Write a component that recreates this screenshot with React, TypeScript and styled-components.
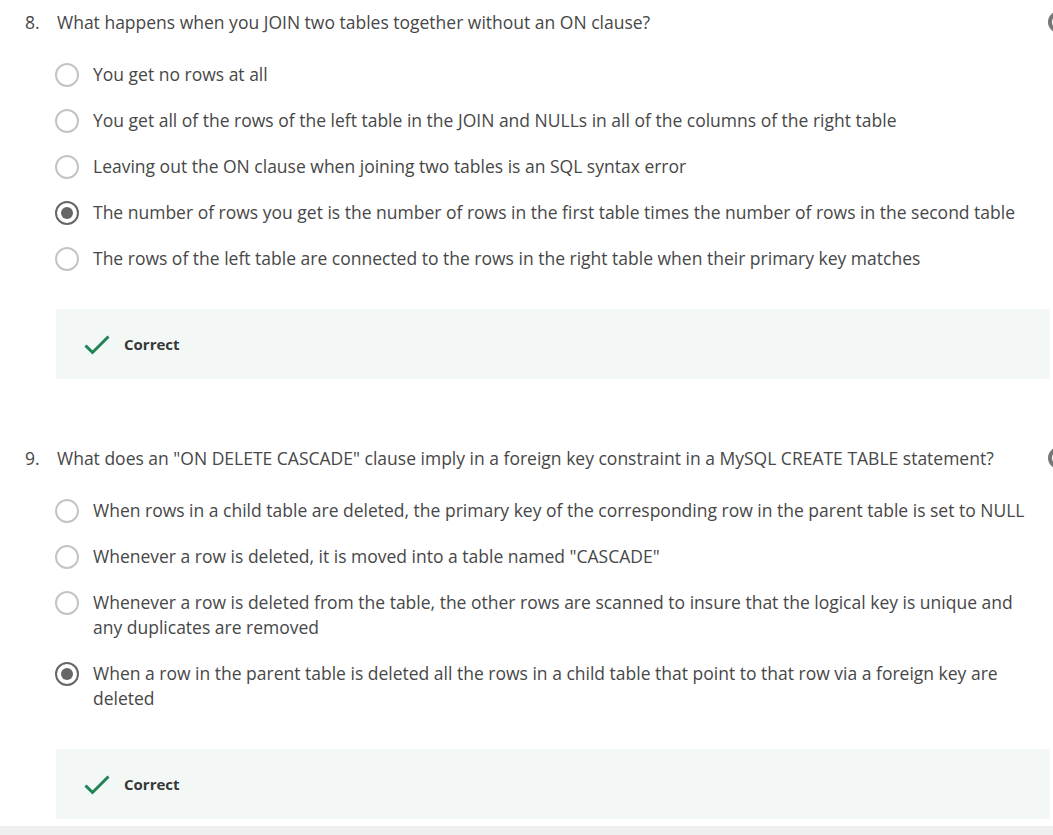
import styled, { createGlobalStyle } from "styled-components";

type Option = { lines: string[]; selected?: boolean };
type Question = { num: number; text: string; options: Option[] };

const questions: Question[] = [
  {
    num: 8,
    text: "What happens when you JOIN two tables together without an ON clause?",
    options: [
      { lines: ["You get no rows at all"] },
      {
        lines: [
          "You get all of the rows of the left table in the JOIN and NULLs in all of the columns of the right table",
        ],
      },
      {
        lines: [
          "Leaving out the ON clause when joining two tables is an SQL syntax error",
        ],
      },
      {
        lines: [
          "The number of rows you get is the number of rows in the first table times the number of rows in the second table",
        ],
        selected: true,
      },
      {
        lines: [
          "The rows of the left table are connected to the rows in the right table when their primary key matches",
        ],
      },
    ],
  },
  {
    num: 9,
    text: 'What does an "ON DELETE CASCADE" clause imply in a foreign key constraint in a MySQL CREATE TABLE statement?',
    options: [
      {
        lines: [
          "When rows in a child table are deleted, the primary key of the corresponding row in the parent table is set to NULL",
        ],
      },
      {
        lines: [
          'Whenever a row is deleted, it is moved into a table named "CASCADE"',
        ],
      },
      {
        lines: [
          "Whenever a row is deleted from the table, the other rows are scanned to insure that the logical key is unique and",
          "any duplicates are removed",
        ],
      },
      {
        lines: [
          "When a row in the parent table is deleted all the rows in a child table that point to that row via a foreign key are",
          "deleted",
        ],
        selected: true,
      },
    ],
  },
];

function App() {
  return (
    <>
      <GlobalStyle />
      <Page>
        {questions.map((q) => (
          <QuestionBlock key={q.num}>
            <Header>
              <Num>{q.num}.</Num>
              <Prompt>{q.text}</Prompt>
              <Marker />
            </Header>
            <Options>
              {q.options.map((o, i) => (
                <OptionRow key={i}>
                  <Radio $selected={!!o.selected} />
                  <OptionText>
                    {o.lines.map((l, j) => (
                      <span key={j}>
                        {j > 0 && <br />}
                        {l}
                      </span>
                    ))}
                  </OptionText>
                </OptionRow>
              ))}
            </Options>
            <Feedback>
              <svg width="26" height="20" viewBox="0 0 26 20">
                <path
                  d="M1.5 10.5 L8.5 17.5 L24.5 1.5"
                  fill="none"
                  stroke="#1f8354"
                  strokeWidth="3"
                />
              </svg>
              <FeedbackText>Correct</FeedbackText>
            </Feedback>
          </QuestionBlock>
        ))}
        <BottomBar />
      </Page>
    </>
  );
}

export default App;

const GlobalStyle = createGlobalStyle`
  body {
    margin: 0;
    background: #fff;
    font-family: "Open Sans", "Noto Sans", sans-serif;
  }
`;

const Page = styled.div`
  width: 1053px;
  height: 835px;
  overflow: hidden;
  display: flex;
  flex-direction: column;
  padding-top: 10px;
  box-sizing: border-box;
`;

const QuestionBlock = styled.section`
  padding-left: 25px;
  & + & {
    margin-top: 67px;
  }
`;

const Header = styled.div`
  display: flex;
  align-items: flex-start;
  font-size: 17.5px;
  line-height: 25px;
  color: #474747;
`;

const Num = styled.span`
  width: 32px;
  flex: none;
`;

const Prompt = styled.span`
  flex: 1;
  white-space: nowrap;
`;

const Marker = styled.span`
  flex: none;
  width: 22px;
  height: 22px;
  margin: 1px -17px 0 0;
  border: 4px solid #777;
  border-radius: 50%;
  box-sizing: border-box;
`;

const Options = styled.div`
  margin: 26.5px 0 0 30px;
  display: flex;
  flex-direction: column;
  gap: 21px;
`;

const OptionRow = styled.label`
  display: flex;
  align-items: flex-start;
  gap: 14px;
`;

const Radio = styled.span<{ $selected: boolean }>`
  flex: none;
  width: 24px;
  height: 24px;
  margin-top: 1px;
  box-sizing: border-box;
  border-radius: 50%;
  border: 2px solid ${(p) => (p.$selected ? "#666" : "#c4c4c4")};
  display: grid;
  place-items: center;
  &::after {
    content: "";
    width: 12px;
    height: 12px;
    border-radius: 50%;
    background: #666;
    display: ${(p) => (p.$selected ? "block" : "none")};
  }
`;

const OptionText = styled.span`
  font-size: 17.5px;
  line-height: 25px;
  color: #474747;
  white-space: nowrap;
`;

const Feedback = styled.div`
  margin: 38.5px 3px 0 31px;
  height: 70px;
  background: #f3f8f7;
  display: flex;
  align-items: center;
  gap: 14px;
  padding-left: 28px;
  svg {
    margin-top: 1px;
  }
`;

const FeedbackText = styled.span`
  font-size: 15px;
  font-weight: 700;
  color: #373737;
`;

const BottomBar = styled.div`
  margin-top: auto;
  height: 9px;
  background: #efefef;
`;
